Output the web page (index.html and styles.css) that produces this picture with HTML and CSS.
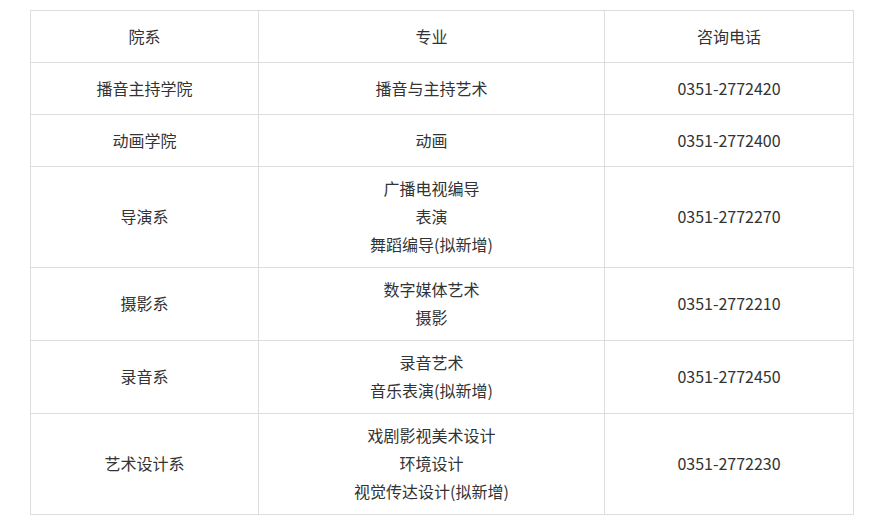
FILE: index.html
```html
<!DOCTYPE html>
<html lang="zh-CN">
<head>
<meta charset="utf-8">
<title>咨询电话</title>
<link rel="stylesheet" href="styles.css">
</head>
<body>
<table class="info">
  <colgroup>
    <col class="c1">
    <col class="c2">
    <col class="c3">
  </colgroup>
  <tr><td>院系</td><td>专业</td><td>咨询电话</td></tr>
  <tr><td>播音主持学院</td><td>播音与主持艺术</td><td>0351-2772420</td></tr>
  <tr><td>动画学院</td><td>动画</td><td>0351-2772400</td></tr>
  <tr><td>导演系</td><td>广播电视编导<br>表演<br>舞蹈编导(拟新增)</td><td>0351-2772270</td></tr>
  <tr><td>摄影系</td><td>数字媒体艺术<br>摄影</td><td>0351-2772210</td></tr>
  <tr><td>录音系</td><td>录音艺术<br>音乐表演(拟新增)</td><td>0351-2772450</td></tr>
  <tr><td>艺术设计系</td><td>戏剧影视美术设计<br>环境设计<br>视觉传达设计(拟新增)</td><td>0351-2772230</td></tr>
</table>
</body>
</html>
```
FILE: styles.css
```css
html, body {
  margin: 0;
  padding: 0;
  background: #fff;
}
body {
  padding: 10px 0 0 30px;
  font-family: "Noto Sans CJK SC", "Noto Sans", sans-serif;
  font-size: 16px;
  color: #333;
}
.info {
  border-collapse: collapse;
  width: 823px;
  table-layout: fixed;
}
.c1 { width: 228px; }
.c2 { width: 346px; }
.c3 { width: 249px; }
.info td {
  border: 1px solid #dddddd;
  text-align: center;
  vertical-align: middle;
  padding: 7px 4px 9px;
  line-height: 28px;
  height: 35px;
}
```
